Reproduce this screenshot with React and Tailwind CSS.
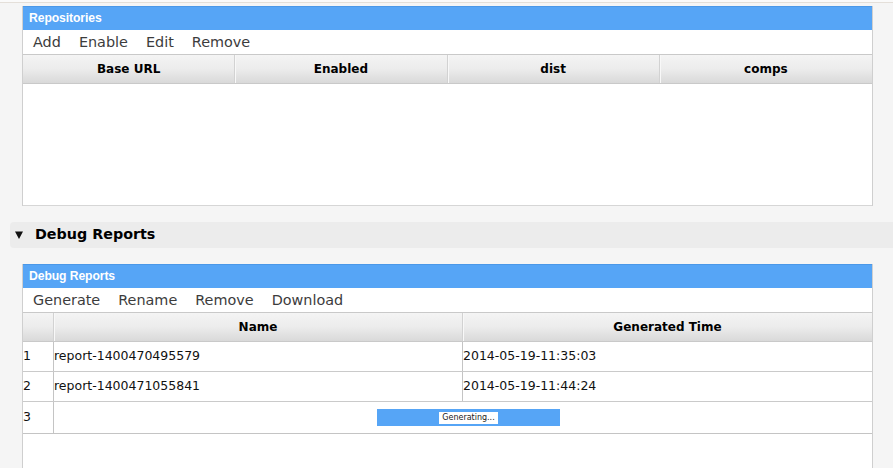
import React from 'react';

// --- Components ---

const TitleBar = ({ title }) => (
    <div className="h-[24px] bg-[#56a5f6] border-t border-[#4b98e8] flex items-center pl-[6px]">
        <span className="text-white font-bold text-[12.2px] font-['Liberation_Sans',Arial,sans-serif] tracking-[-0.1px]">
            {title}
        </span>
    </div>
);

const Toolbar = ({ items }) => (
    <div className="h-[24px] flex items-center gap-[18px] pl-[10px] bg-white text-[14.4px] text-[#3c3c3c]">
        {items.map((it) => (
            <span key={it} className="leading-none">{it}</span>
        ))}
    </div>
);

const HeaderCell = ({ label, last }) => (
    <div
        className={
            'flex items-center justify-center font-bold text-[12px] text-black ' +
            (last ? '' : 'border-r border-[#d2d2d2] shadow-[1px_0_0_#f8f8f8]')
        }
    >
        {label}
    </div>
);

const Repositories = () => (
    <div className="border-l border-r border-[#cfcfcf] bg-white">
        <TitleBar title="Repositories" />
        <Toolbar items={['Add', 'Enable', 'Edit', 'Remove']} />
        <div className="h-[30px] grid grid-cols-4 border-t border-b border-[#c9c9c9] bg-gradient-to-b from-[#f4f4f4] via-[#ececec] to-[#d9d9d9]">
            <HeaderCell label="Base URL" />
            <HeaderCell label="Enabled" />
            <HeaderCell label="dist" />
            <HeaderCell label="comps" last />
        </div>
        <div className="h-[122px] border-b border-[#d6d6d6]" />
    </div>
);

const reports = [
    { name: 'report-1400470495579', time: '2014-05-19-11:35:03' },
    { name: 'report-1400471055841', time: '2014-05-19-11:44:24' },
];

const DebugReports = () => (
    <div className="border-l border-r border-[#cfcfcf] bg-white h-[204px]">
        <TitleBar title="Debug Reports" />
        <Toolbar items={['Generate', 'Rename', 'Remove', 'Download']} />
        <div className="h-[30px] grid grid-cols-[31px_1fr_1fr] border-t border-b border-[#c9c9c9] bg-gradient-to-b from-[#f4f4f4] via-[#ececec] to-[#d9d9d9]">
            <HeaderCell label="" />
            <HeaderCell label="Name" />
            <HeaderCell label="Generated Time" last />
        </div>
        {reports.map((r, i) => (
            <div key={r.name} className="h-[30px] grid grid-cols-[31px_1fr_1fr] border-b border-[#cacaca] text-[12.5px] text-[#111]">
                <div className="flex items-center border-r border-[#c4c4c4]">{i + 1}</div>
                <div className="flex items-center border-r border-[#c4c4c4]">{r.name}</div>
                <div className="flex items-center">{r.time}</div>
            </div>
        ))}
        <div className="h-[32px] grid grid-cols-[31px_1fr] border-b border-[#c4c4c4] text-[12.5px] text-[#111]">
            <div className="flex items-center border-r border-[#c4c4c4]">3</div>
            <div className="flex items-center pl-[323px]">
                <div className="w-[183px] h-[17px] bg-[#56a5f6] flex items-center justify-center">
                    <span className="bg-white px-[3px] h-[12px] flex items-center text-[8px] text-[#222] leading-none">
                        Generating...
                    </span>
                </div>
            </div>
        </div>
    </div>
);

export default function App() {
    return (
        <div className="w-[893px] h-[468px] overflow-hidden bg-[#f5f5f5] font-['DejaVu_Sans',sans-serif]">
            <div className="h-[3px] border-b border-[#e4dfd9] bg-[#fafafa]" />
            <div className="pl-[22px] pr-[20px] pt-[3px]">
                <Repositories />
            </div>
            <div className="mt-[16px] ml-[10px] h-[26px] bg-[#ececec] rounded-l-[4px] flex items-center">
                <svg width="8" height="8" viewBox="0 0 8 8" className="ml-[5px]">
                    <polygon points="0,0.5 8,0.5 4,8" fill="#111" />
                </svg>
                <span className="ml-[12px] font-bold text-[14.3px] text-black">Debug Reports</span>
            </div>
            <div className="pl-[22px] pr-[20px] pt-[16px]">
                <DebugReports />
            </div>
        </div>
    );
}
